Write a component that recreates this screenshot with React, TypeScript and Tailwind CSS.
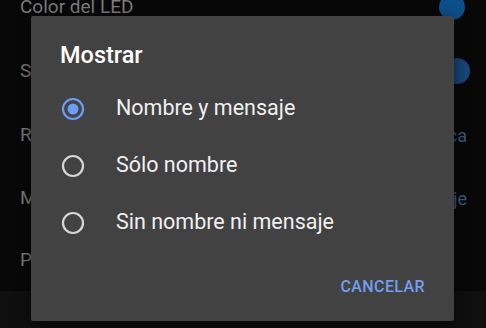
import { useState } from 'react';

const options = ['Nombre y mensaje', 'Sólo nombre', 'Sin nombre ni mensaje'];

function Radio({ checked }: { checked: boolean }) {
  return (
    <svg width="24" height="24" viewBox="0 0 24 24" className="shrink-0">
      <circle
        cx="12"
        cy="12"
        r="10"
        fill="none"
        stroke={checked ? '#6c9cf4' : '#d6d6d6'}
        strokeWidth="2.2"
      />
      {checked && <circle cx="12" cy="12" r="5.5" fill="#6c9cf4" />}
    </svg>
  );
}

export default function App() {
  const [selected, setSelected] = useState(0);

  return (
    <div
      className="relative w-[486px] h-[328px] overflow-hidden bg-[#080808]"
      style={{ fontFamily: 'Roboto, "Noto Sans", sans-serif' }}
    >
      {/* settings list behind the dialog */}
      <div className="flex flex-col -mt-[25px]">
        <div className="h-[64px] flex items-center justify-between pl-[20px] pr-[21px]">
          <span className="text-[19px] text-[#7c7c7c]">Color del LED</span>
          <span className="w-[26px] h-[26px] rounded-full bg-[#0d4f8a]"></span>
        </div>
        <div className="h-[64px] flex items-center justify-between pl-[20px] pr-[16px]">
          <span className="text-[19px] text-[#7c7c7c]">S</span>
          <span className="w-[26px] h-[26px] rounded-full bg-[#18457a]"></span>
        </div>
        <div className="h-[64px] flex items-center justify-between pl-[20px] pr-[19px]">
          <span className="text-[19px] text-[#7c7c7c]">R</span>
          <span className="text-[18px] text-[#3b587f]">ca</span>
        </div>
        <div className="h-[62px] flex items-center justify-between pl-[20px] pr-[19px]">
          <span className="text-[19px] text-[#7c7c7c]">M</span>
          <span className="text-[18px] text-[#3b587f]">je</span>
        </div>
        <div className="h-[62px] flex items-center pl-[20px]">
          <span className="text-[19px] text-[#7c7c7c]">P</span>
        </div>
        <div className="h-[60px] bg-[#0f0f0f]"></div>
      </div>

      {/* dialog */}
      <div className="absolute left-[31px] top-[16px] w-[423px] h-[305px] bg-[#424242] rounded-[2px] shadow-[0_4px_16px_rgba(0,0,0,0.6)] flex flex-col pt-[24px] pb-[24px]">
        <h2 className="pl-[29px] text-[23.5px] leading-[30px] font-medium text-white">Mostrar</h2>
        <div className="flex flex-col mt-[10px]">
          {options.map((label, i) => (
            <button
              key={label}
              onClick={() => setSelected(i)}
              className="h-[57px] flex items-center gap-[31px] pl-[30px] text-left"
            >
              <Radio checked={selected === i} />
              <span className="text-[21.5px] text-[#f0f0f0]">{label}</span>
            </button>
          ))}
        </div>
        <div className="mt-auto flex justify-end pr-[29px]">
          <button className="text-[16px] leading-[20px] font-medium tracking-[0.4px] text-[#719ff0]">
            CANCELAR
          </button>
        </div>
      </div>
    </div>
  );
}
